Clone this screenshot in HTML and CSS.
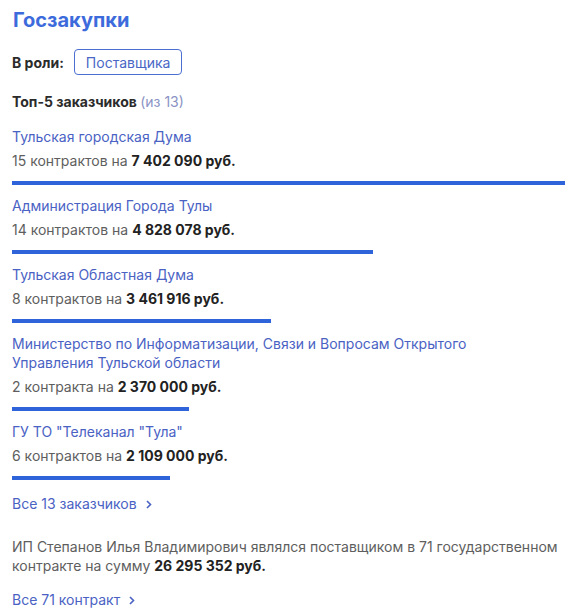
FILE: index.html
```html
<!DOCTYPE html>
<html lang="ru">
<head>
    <meta charset="UTF-8">
    <meta name="viewport" content="width=device-width, initial-scale=1.0">
    <title>Госзакупки</title>
    <link rel="stylesheet" href="styles.css">
</head>
<body>
    <section class="purchases">
        <h1>Госзакупки</h1>

        <div class="role">
            <span class="role-label">В роли:</span>
            <button class="role-btn">Поставщика</button>
        </div>

        <h2 class="top-title">Топ-5 заказчиков <span class="muted">(из 13)</span></h2>

        <ul class="customers">
            <li class="customer">
                <a href="#" class="customer-name">Тульская городская Дума</a>
                <p class="customer-sum">15 контрактов на <b>7 402 090 руб.</b></p>
                <div class="bar" style="width: 100%"></div>
            </li>
            <li class="customer">
                <a href="#" class="customer-name">Администрация Города Тулы</a>
                <p class="customer-sum">14 контрактов на <b>4 828 078 руб.</b></p>
                <div class="bar" style="width: 65.2%"></div>
            </li>
            <li class="customer">
                <a href="#" class="customer-name">Тульская Областная Дума</a>
                <p class="customer-sum">8 контрактов на <b>3 461 916 руб.</b></p>
                <div class="bar" style="width: 46.8%"></div>
            </li>
            <li class="customer">
                <a href="#" class="customer-name">Министерство по Информатизации, Связи и Вопросам Открытого Управления Тульской области</a>
                <p class="customer-sum">2 контракта на <b>2 370 000 руб.</b></p>
                <div class="bar" style="width: 32%"></div>
            </li>
            <li class="customer">
                <a href="#" class="customer-name">ГУ ТО "Телеканал "Тула"</a>
                <p class="customer-sum">6 контрактов на <b>2 109 000 руб.</b></p>
                <div class="bar" style="width: 28.5%"></div>
            </li>
        </ul>

        <a href="#" class="more">Все 13 заказчиков
            <svg class="chev" width="6" height="9" viewBox="0 0 6 9"><path d="M1 1l3.5 3.5L1 8" fill="none" stroke="currentColor" stroke-width="1.6"/></svg>
        </a>

        <p class="summary">ИП Степанов Илья Владимирович являлся поставщиком в 71 государственном контракте на сумму <b>26 295 352 руб.</b></p>

        <a href="#" class="more">Все 71 контракт
            <svg class="chev" width="6" height="9" viewBox="0 0 6 9"><path d="M1 1l3.5 3.5L1 8" fill="none" stroke="currentColor" stroke-width="1.6"/></svg>
        </a>
    </section>
</body>
</html>
```

FILE: styles.css
```css
body {
    margin: 0;
    background: #fff;
    font-family: Inter, "Noto Sans", sans-serif;
    font-size: 14px;
    color: #5e5e5e;
}
.purchases {
    padding: 8px 5px 0 12px;
}
h1 {
    margin: 0 0 0 1px;
    font-size: 20px;
    line-height: 24px;
    font-weight: 700;
    color: #3d6bdc;
}
.role {
    display: flex;
    align-items: center;
    gap: 10px;
    margin-top: 17px;
}
.role-label {
    font-weight: 700;
    color: #2b2b2b;
}
.role-btn {
    font-family: inherit;
    font-size: 14px;
    color: #4a67c6;
    background: #fff;
    border: 1px solid #4a6fd0;
    border-radius: 4px;
    height: 26px;
    padding: 0 11px;
}
.top-title {
    margin: 17px 0 0;
    font-size: 14px;
    line-height: 20px;
    font-weight: 700;
    color: #2b2b2b;
}
.muted {
    font-weight: 400;
    color: #8a93c4;
}
.customers {
    list-style: none;
    margin: 15px 0 0;
    padding: 0;
}
.customer {
    margin-bottom: 11px;
}
.customer-name {
    display: block;
    max-width: 520px;
    line-height: 19px;
    color: #4a62c4;
    text-decoration: none;
}
.customer-sum {
    margin: 5px 0 0;
    line-height: 20px;
}
.customer-sum b, .summary b {
    color: #222;
}
.bar {
    height: 4px;
    margin-top: 10px;
    background: #2f63d9;
}
.more {
    display: flex;
    align-items: center;
    gap: 9px;
    width: fit-content;
    margin-top: 14px;
    line-height: 20px;
    color: #4a62c4;
    text-decoration: none;
}
.summary {
    margin: 23px 0 15px;
    line-height: 19px;
}
```
